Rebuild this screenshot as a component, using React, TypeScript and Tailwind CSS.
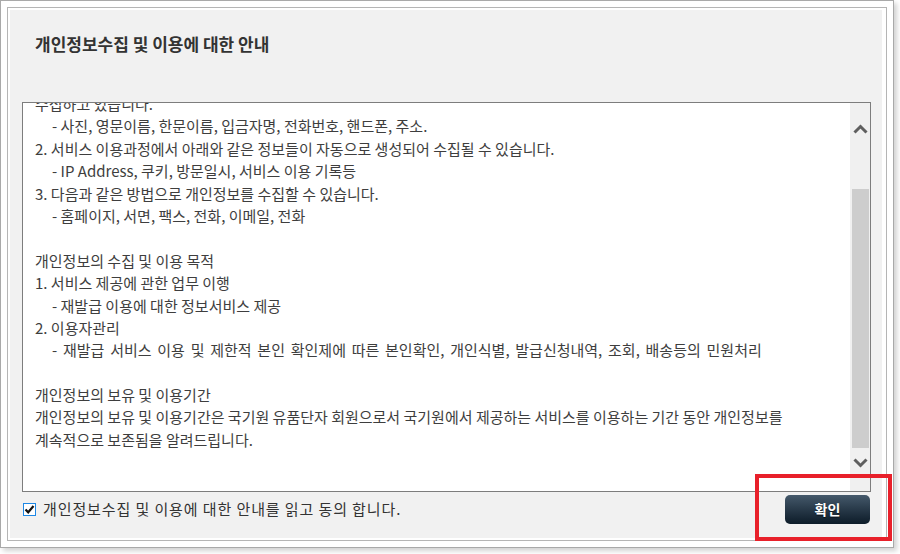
import React from 'react';

const lines: { text: string; indent?: boolean; wide?: boolean }[] = [
  { text: '수집하고 있습니다.' },
  { text: '- 사진, 영문이름, 한문이름, 입금자명, 전화번호, 핸드폰, 주소.', indent: true },
  { text: '2. 서비스 이용과정에서 아래와 같은 정보들이 자동으로 생성되어 수집될 수 있습니다.' },
  { text: '- IP Address, 쿠키, 방문일시, 서비스 이용 기록등', indent: true },
  { text: '3. 다음과 같은 방법으로 개인정보를 수집할 수 있습니다.' },
  { text: '- 홈페이지, 서면, 팩스, 전화, 이메일, 전화', indent: true },
  { text: '' },
  { text: '개인정보의 수집 및 이용 목적' },
  { text: '1. 서비스 제공에 관한 업무 이행' },
  { text: '- 재발급 이용에 대한 정보서비스 제공', indent: true },
  { text: '2. 이용자관리' },
  { text: '- 재발급 서비스 이용 및 제한적 본인 확인제에 따른 본인확인, 개인식별, 발급신청내역, 조회, 배송등의 민원처리', indent: true, wide: true },
  { text: '' },
  { text: '개인정보의 보유 및 이용기간' },
  { text: '개인정보의 보유 및 이용기간은 국기원 유품단자 회원으로서 국기원에서 제공하는 서비스를 이용하는 기간 동안 개인정보를' },
  { text: '계속적으로 보존됨을 알려드립니다.' },
];

function Chevron({ down }: { down?: boolean }) {
  return (
    <svg width="15" height="10" viewBox="0 0 15 10" className={down ? 'rotate-180' : ''}>
      <path d="M1.5 8.5 L7.5 2.5 L13.5 8.5" fill="none" stroke="#5f5f5f" strokeWidth="3" />
    </svg>
  );
}

export default function App() {
  return (
    <div className="relative w-[900px] h-[554px] bg-white font-['Noto_Sans_CJK_KR','Malgun_Gothic',sans-serif]">
      <div className="w-[894px] h-[548px] border border-[#a9a9a9] bg-white p-[6px] shadow-[3px_3px_5px_rgba(0,0,0,0.18)]">
        <div className="h-full border border-[#b5b5b5] pl-[2px] pr-[4px] py-[2px]">
          <div className="h-full bg-[#f1f1f1] flex flex-col pl-[12px] pr-[11px]">
            <div className="h-[92px] pt-[23px] pl-[13px]">
              <h1 className="text-[17px] leading-[22px] font-bold text-[#333]">개인정보수집 및 이용에 대한 안내</h1>
            </div>

            <div className="h-[390px] border border-[#7d7d7d] bg-white flex">
              <div className="flex-1 overflow-hidden pl-[12px]">
                <div className="-mt-[10px] text-[15px] leading-[22.4px] text-[#3e3e3e]">
                  {lines.map((l, i) => (
                    <p
                      key={i}
                      className={`h-[22.4px] whitespace-nowrap ${l.indent ? 'pl-[17px]' : ''} ${l.wide ? '[word-spacing:2.4px]' : ''}`}
                    >
                      {l.text}
                    </p>
                  ))}
                </div>
              </div>
              <div className="w-[20px] bg-[#f0f0f0] flex flex-col">
                <div className="h-[86px] flex justify-center pt-[21px]">
                  <Chevron />
                </div>
                <div className="h-[259px] ml-[2px] w-[17px] bg-[#cdcdcd]" />
                <div className="flex-1 flex justify-center pt-[10px]">
                  <Chevron down />
                </div>
              </div>
            </div>

            <div className="flex-1 flex items-start justify-between">
              <label className="flex items-center gap-[7px] mt-[8px] ml-[1px]">
                <span className="w-[13px] h-[13px] border border-[#1e88e5] bg-white flex items-center justify-center">
                  <svg width="11" height="11" viewBox="0 0 11 11">
                    <path d="M1.5 5.5 L4.2 8.3 L9.5 2" fill="none" stroke="#111" strokeWidth="2.2" />
                  </svg>
                </span>
                <span className="text-[15px] leading-[18px] tracking-[0.9px] text-[#333]">
                  개인정보수집 및 이용에 대한 안내를 읽고 동의 합니다.
                </span>
              </label>
              <button className="mt-[3px] mr-[1px] w-[85px] h-[29px] rounded-[5px] bg-gradient-to-b from-[#45596b] to-[#0d1c29] text-white text-[14px] font-bold [text-shadow:0_1px_1px_rgba(0,0,0,0.6)]">
                확인
              </button>
            </div>
          </div>
        </div>
      </div>

      <div className="absolute left-[755px] top-[474px] w-[137px] h-[67px] border-4 border-[#e8202a]" />
    </div>
  );
}
